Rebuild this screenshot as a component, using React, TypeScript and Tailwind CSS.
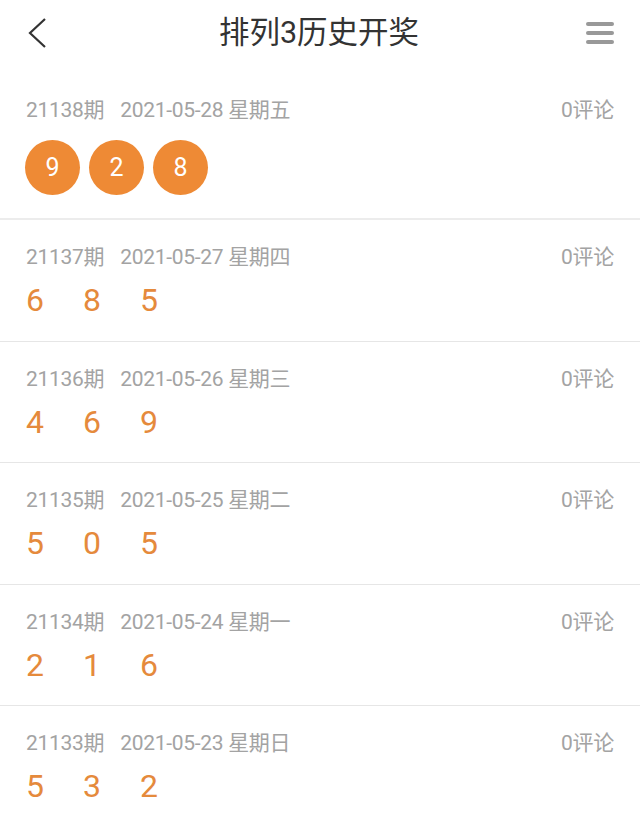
const DRAWS = [
  { issue: '21137', date: '2021-05-27', week: '星期四', nums: [6, 8, 5] },
  { issue: '21136', date: '2021-05-26', week: '星期三', nums: [4, 6, 9] },
  { issue: '21135', date: '2021-05-25', week: '星期二', nums: [5, 0, 5] },
  { issue: '21134', date: '2021-05-24', week: '星期一', nums: [2, 1, 6] },
  { issue: '21133', date: '2021-05-23', week: '星期日', nums: [5, 3, 2] },
]

function Meta({ issue, date, week }: { issue: string; date: string; week: string }) {
  return (
    <div className="flex items-center justify-between h-[28px] text-[21px] tracking-[-0.3px] text-[#a3a3a3]">
      <div className="flex">
        <span>{issue}期</span>
        <span className="ml-[16px]">{date} {week}</span>
      </div>
      <span>0评论</span>
    </div>
  )
}

export default function App() {
  return (
    <div
      className="w-[640px] h-[823px] overflow-hidden bg-white"
      style={{ fontFamily: 'Roboto, "Noto Sans CJK SC", sans-serif' }}
    >
      {/* header */}
      <header className="h-[66px] flex items-center justify-between px-[26px]">
        <svg width="22" height="32" viewBox="0 0 22 32">
          <path d="M19 2 L4 16 L19 30" fill="none" stroke="#333" strokeWidth="2.2" />
        </svg>
        <h1 className="text-[30.5px] text-[#333] leading-none ml-[4px]">排列3历史开奖</h1>
        <div className="flex flex-col gap-[5px] w-[28px]">
          <span className="h-[4px] rounded-full bg-[#999]" />
          <span className="h-[4px] rounded-full bg-[#999]" />
          <span className="h-[4px] rounded-full bg-[#999]" />
        </div>
      </header>

      {/* latest draw */}
      <div className="px-[26px] pt-[31px] pb-[23px] border-b-2 border-[#ececec]">
        <Meta issue="21138" date="2021-05-28" week="星期五" />
        <div className="flex gap-[9px] mt-[15px] -ml-[1px]">
          {[9, 2, 8].map((n, i) => (
            <span
              key={i}
              className="w-[55px] h-[55px] rounded-full bg-[#ee8a35] text-white text-[25px] flex items-center justify-center"
            >
              {n}
            </span>
          ))}
        </div>
      </div>

      {DRAWS.map(d => (
        <div key={d.issue} className="px-[26px] pt-[24px] pb-[20.5px] border-b border-[#e6e6e6]">
          <Meta issue={d.issue} date={d.date} week={d.week} />
          <div className="flex mt-[8px] h-[40px] items-center text-[32px] text-[#e58a3c]">
            {d.nums.map((n, i) => (
              <span key={i} className="w-[57px]">{n}</span>
            ))}
          </div>
        </div>
      ))}
    </div>
  )
}
